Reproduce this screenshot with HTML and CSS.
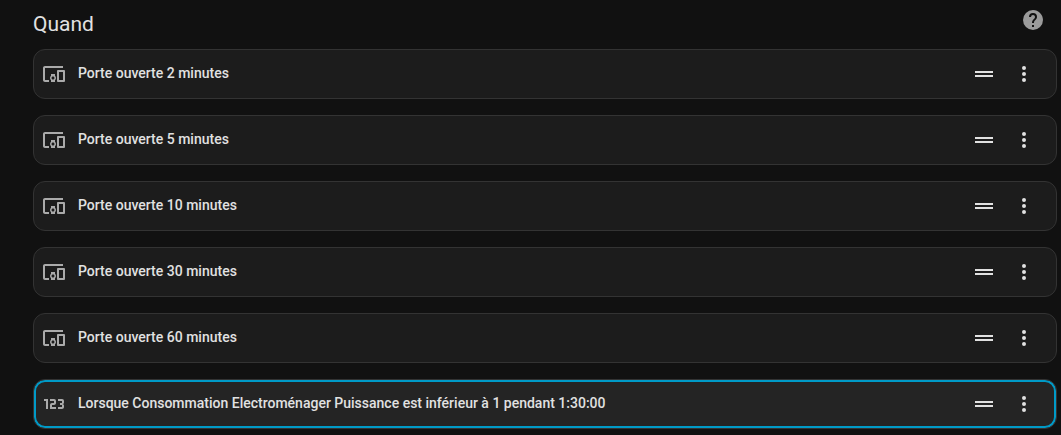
FILE: index.html
```
<!DOCTYPE html>
<html lang="fr">
<head>
    <meta charset="UTF-8">
    <meta name="viewport" content="width=device-width, initial-scale=1.0">
    <title>Quand</title>
    <link rel="stylesheet" href="styles.css">
</head>
<body>
    <svg class="sprite" aria-hidden="true">
        <symbol id="devices" viewBox="0 0 24 24"><path d="M3 6H21V4H3C1.9 4 1 4.9 1 6V18C1 19.1 1.9 20 3 20H7V18H3V6M13 12H9V13.78C8.39 14.33 8 15.11 8 16C8 16.89 8.39 17.67 9 18.22V20H13V18.22C13.61 17.67 14 16.88 14 16S13.61 14.33 13 13.78V12M11 17.5C10.17 17.5 9.5 16.83 9.5 16S10.17 14.5 11 14.5 12.5 15.17 12.5 16 11.83 17.5 11 17.5M22 8H16C15.5 8 15 8.5 15 9V19C15 19.5 15.5 20 16 20H22C22.5 20 23 19.5 23 19V9C23 8.5 22.5 8 22 8M21 18H17V10H21V18Z"/></symbol>
        <symbol id="numeric" viewBox="0 0 24 24"><path d="M4,17V9H2V7H6V17H4M22,15C22,16.11 21.1,17 20,17H16V15H20V13H18V11H20V9H16V7H20A2,2 0 0,1 22,9V10.5A1.5,1.5 0 0,1 20.5,12A1.5,1.5 0 0,1 22,13.5V15M14,15V17H8V13C8,11.89 8.9,11 10,11H12V9H8V7H12A2,2 0 0,1 14,9V11C14,12.11 13.1,13 12,13H10V15H14Z"/></symbol>
        <symbol id="drag" viewBox="0 0 24 24"><path d="M3 9H21V11H3ZM3 13H21V15H3Z"/></symbol>
        <symbol id="dots" viewBox="0 0 24 24"><path d="M12,16A2,2 0 0,1 14,18A2,2 0 0,1 12,20A2,2 0 0,1 10,18A2,2 0 0,1 12,16M12,10A2,2 0 0,1 14,12A2,2 0 0,1 12,14A2,2 0 0,1 10,12A2,2 0 0,1 12,10M12,4A2,2 0 0,1 14,6A2,2 0 0,1 12,8A2,2 0 0,1 10,6A2,2 0 0,1 12,4Z"/></symbol>
        <symbol id="help" viewBox="0 0 24 24"><path d="M15.07,11.25L14.17,12.17C13.45,12.89 13,13.5 13,15H11V14.5C11,13.39 11.45,12.39 12.17,11.67L13.41,10.41C13.78,10.05 14,9.55 14,9C14,7.89 13.1,7 12,7A2,2 0 0,0 10,9H8A4,4 0 0,1 12,5A4,4 0 0,1 16,9C16,9.88 15.64,10.67 15.07,11.25M13,19H11V17H13M12,2A10,10 0 0,0 2,12A10,10 0 0,0 12,22A10,10 0 0,0 22,12C22,6.47 17.5,2 12,2Z"/></symbol>
    </svg>
    <main class="triggers">
        <header class="header">
            <h2>Quand</h2>
            <button class="help" aria-label="Aide"><svg class="icon"><use href="#help"/></svg></button>
        </header>
        <ul class="list">
            <li class="card">
                <svg class="icon type"><use href="#devices"/></svg>
                <h3>Porte ouverte 2 minutes</h3>
                <button class="action" aria-label="Déplacer"><svg class="icon"><use href="#drag"/></svg></button>
                <button class="action" aria-label="Menu"><svg class="icon"><use href="#dots"/></svg></button>
            </li>
            <li class="card">
                <svg class="icon type"><use href="#devices"/></svg>
                <h3>Porte ouverte 5 minutes</h3>
                <button class="action" aria-label="Déplacer"><svg class="icon"><use href="#drag"/></svg></button>
                <button class="action" aria-label="Menu"><svg class="icon"><use href="#dots"/></svg></button>
            </li>
            <li class="card">
                <svg class="icon type"><use href="#devices"/></svg>
                <h3>Porte ouverte 10 minutes</h3>
                <button class="action" aria-label="Déplacer"><svg class="icon"><use href="#drag"/></svg></button>
                <button class="action" aria-label="Menu"><svg class="icon"><use href="#dots"/></svg></button>
            </li>
            <li class="card">
                <svg class="icon type"><use href="#devices"/></svg>
                <h3>Porte ouverte 30 minutes</h3>
                <button class="action" aria-label="Déplacer"><svg class="icon"><use href="#drag"/></svg></button>
                <button class="action" aria-label="Menu"><svg class="icon"><use href="#dots"/></svg></button>
            </li>
            <li class="card">
                <svg class="icon type"><use href="#devices"/></svg>
                <h3>Porte ouverte 60 minutes</h3>
                <button class="action" aria-label="Déplacer"><svg class="icon"><use href="#drag"/></svg></button>
                <button class="action" aria-label="Menu"><svg class="icon"><use href="#dots"/></svg></button>
            </li>
            <li class="card selected">
                <svg class="icon type"><use href="#numeric"/></svg>
                <h3>Lorsque Consommation Electroménager Puissance est inférieur à 1 pendant 1:30:00</h3>
                <button class="action" aria-label="Déplacer"><svg class="icon"><use href="#drag"/></svg></button>
                <button class="action" aria-label="Menu"><svg class="icon"><use href="#dots"/></svg></button>
            </li>
        </ul>
    </main>
</body>
</html>
```
FILE: styles.css
```
* {
    box-sizing: border-box;
}
body {
    margin: 0;
    background: #111111;
    color: #e1e1e1;
    font-family: Roboto, "Noto Sans", sans-serif;
}
.sprite {
    display: none;
}
.triggers {
    padding: 0 4px 6px 33px;
}
.header {
    display: flex;
    align-items: center;
    justify-content: space-between;
    padding: 0 4px 9px 0;
}
h2 {
    margin: 0;
    padding-top: 8px;
    font-size: 21px;
    font-weight: 400;
    line-height: 32px;
}
button {
    display: flex;
    align-items: center;
    justify-content: center;
    padding: 8px;
    border: none;
    background: none;
    color: inherit;
    cursor: pointer;
}
.help {
    color: #9b9b9b;
}
.icon {
    display: block;
    flex: none;
    width: 24px;
    height: 24px;
    fill: currentColor;
}
.list {
    display: flex;
    flex-direction: column;
    gap: 16px;
    margin: 0;
    padding: 0;
    list-style: none;
}
.card {
    display: flex;
    align-items: center;
    padding: 4px 12px 4px 8px;
    border: 1px solid #333333;
    border-radius: 12px;
    background: #1c1c1c;
}
.selected {
    background: #242424;
    box-shadow: inset 0 0 0 2px #009ac7;
}
.type {
    color: #aaaaaa;
}
h3 {
    flex: 1;
    margin: 0;
    padding: 0 12px 2px;
    font-size: 14px;
    font-weight: 500;
    line-height: 20px;
}
```
